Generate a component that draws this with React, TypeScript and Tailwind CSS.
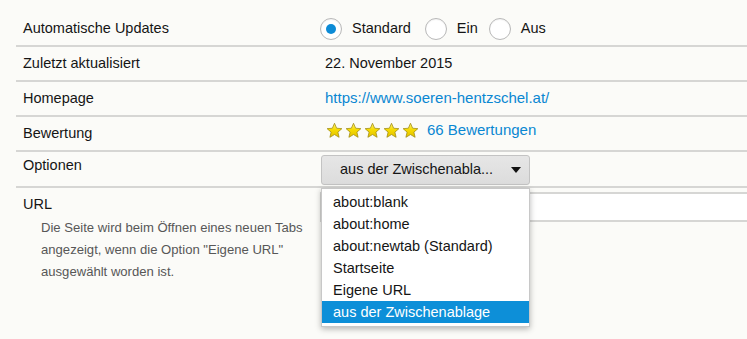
import React from "react";

function Radio({ checked }: { checked?: boolean }) {
  return (
    <span className="w-[22px] h-[22px] rounded-full border border-[#b8b8b8] bg-white flex items-center justify-center shrink-0 shadow-[inset_0_1px_1px_rgba(0,0,0,0.05)]">
      {checked && <span className="w-[10px] h-[10px] rounded-full bg-[#0d8bd6]" />}
    </span>
  );
}

function Star() {
  return (
    <svg width="17" height="17" viewBox="0 0 24 24" className="shrink-0">
      <defs>
        <linearGradient id="sg" x1="0" y1="0" x2="0" y2="1">
          <stop offset="0" stopColor="#fff27a" />
          <stop offset="0.45" stopColor="#f7dc00" />
          <stop offset="1" stopColor="#e2c000" />
        </linearGradient>
      </defs>
      <path
        d="M12 1.8l3 7 7.4.6-5.6 4.9 1.7 7.3L12 17.7l-6.5 3.9 1.7-7.3-5.6-4.9 7.4-.6z"
        fill="url(#sg)"
        stroke="#a08c10"
        strokeWidth="1.1"
        strokeLinejoin="round"
      />
    </svg>
  );
}

const rowCls = "flex h-[35px] border-b-2 border-[#d6d6d4] items-center";
const labelCls = "w-[304px] shrink-0 pl-[7px]";

export default function App() {
  const items = [
    "about:blank",
    "about:home",
    "about:newtab (Standard)",
    "Startseite",
    "Eigene URL",
    "aus der Zwischenablage",
  ];
  return (
    <div className="w-[747px] h-[339px] overflow-hidden bg-[#fbfbf8] pt-[12px] pl-[16px] font-['Liberation_Sans',Arial,sans-serif] text-[14.5px] text-[#151515]">
      <div className={rowCls}>
        <div className={labelCls}>Automatische Updates</div>
        <div className="flex items-center pt-[1px]">
          <Radio checked />
          <span className="ml-[10px] mr-[14px]">Standard</span>
          <Radio />
          <span className="ml-[10px] mr-[11px]">Ein</span>
          <Radio />
          <span className="ml-[10px]">Aus</span>
        </div>
      </div>
      <div className={rowCls}>
        <div className={labelCls}>Zuletzt aktualisiert</div>
        <div className="pl-[5px]">22. November 2015</div>
      </div>
      <div className={rowCls}>
        <div className={labelCls}>Homepage</div>
        <div className="pl-[5px] text-[15px] text-[#0a87d2]">https://www.soeren-hentzschel.at/</div>
      </div>
      <div className={rowCls}>
        <div className={labelCls}>Bewertung</div>
        <div className="pl-[6px] pb-[6px] flex items-center">
          <div className="flex gap-[2px]">
            <Star />
            <Star />
            <Star />
            <Star />
            <Star />
          </div>
          <span className="ml-[8px] text-[15px] text-[#0a87d2]">66 Bewertungen</span>
        </div>
      </div>
      <div className="flex h-[36px] border-b-2 border-[#d6d6d4] items-center">
        <div className={labelCls + " pb-[6px]"}>Optionen</div>
        <div className="self-start mt-[3px] ml-[1px] relative">
          <div className="w-[209px] h-[30px] rounded-[3px] border border-[#c3c3c3] bg-gradient-to-b from-[#e6e6e6] to-[#dcdcdc] flex items-center justify-between pl-[18px] pr-[8px]">
            <span>aus der Zwischenabla...</span>
            <svg width="10" height="6" viewBox="0 0 10 6">
              <path d="M0 0h10L5 6z" fill="#111" />
            </svg>
          </div>
          <div className="absolute left-0 top-[33px] z-10 w-[209px] bg-white border border-[#c8c8c8] shadow-[0_2px_6px_rgba(0,0,0,0.28)] pt-[2px] pb-[3px]">
            {items.map((it, i) => (
              <div
                key={it}
                className={
                  "h-[22px] leading-[22px] pl-[11px] " +
                  (i === items.length - 1 ? "bg-[#0d8fd8] text-white" : "")
                }
              >
                {it}
              </div>
            ))}
          </div>
        </div>
      </div>
      <div className="flex">
        <div className="w-[304px] shrink-0">
          <div className="pl-[7px] pt-[6px] leading-[20px]">URL</div>
          <div className="pl-[25px] mt-[3px] text-[13.1px] leading-[22px] text-[#575757]">
            Die Seite wird beim Öffnen eines neuen Tabs
            <br />
            angezeigt, wenn die Option "Eigene URL"
            <br />
            ausgewählt worden ist.
          </div>
        </div>
        <div className="mt-[4px] h-[30px] w-[440px] shrink-0 border-2 border-[#d6d6d4] bg-white" />
      </div>
    </div>
  );
}
